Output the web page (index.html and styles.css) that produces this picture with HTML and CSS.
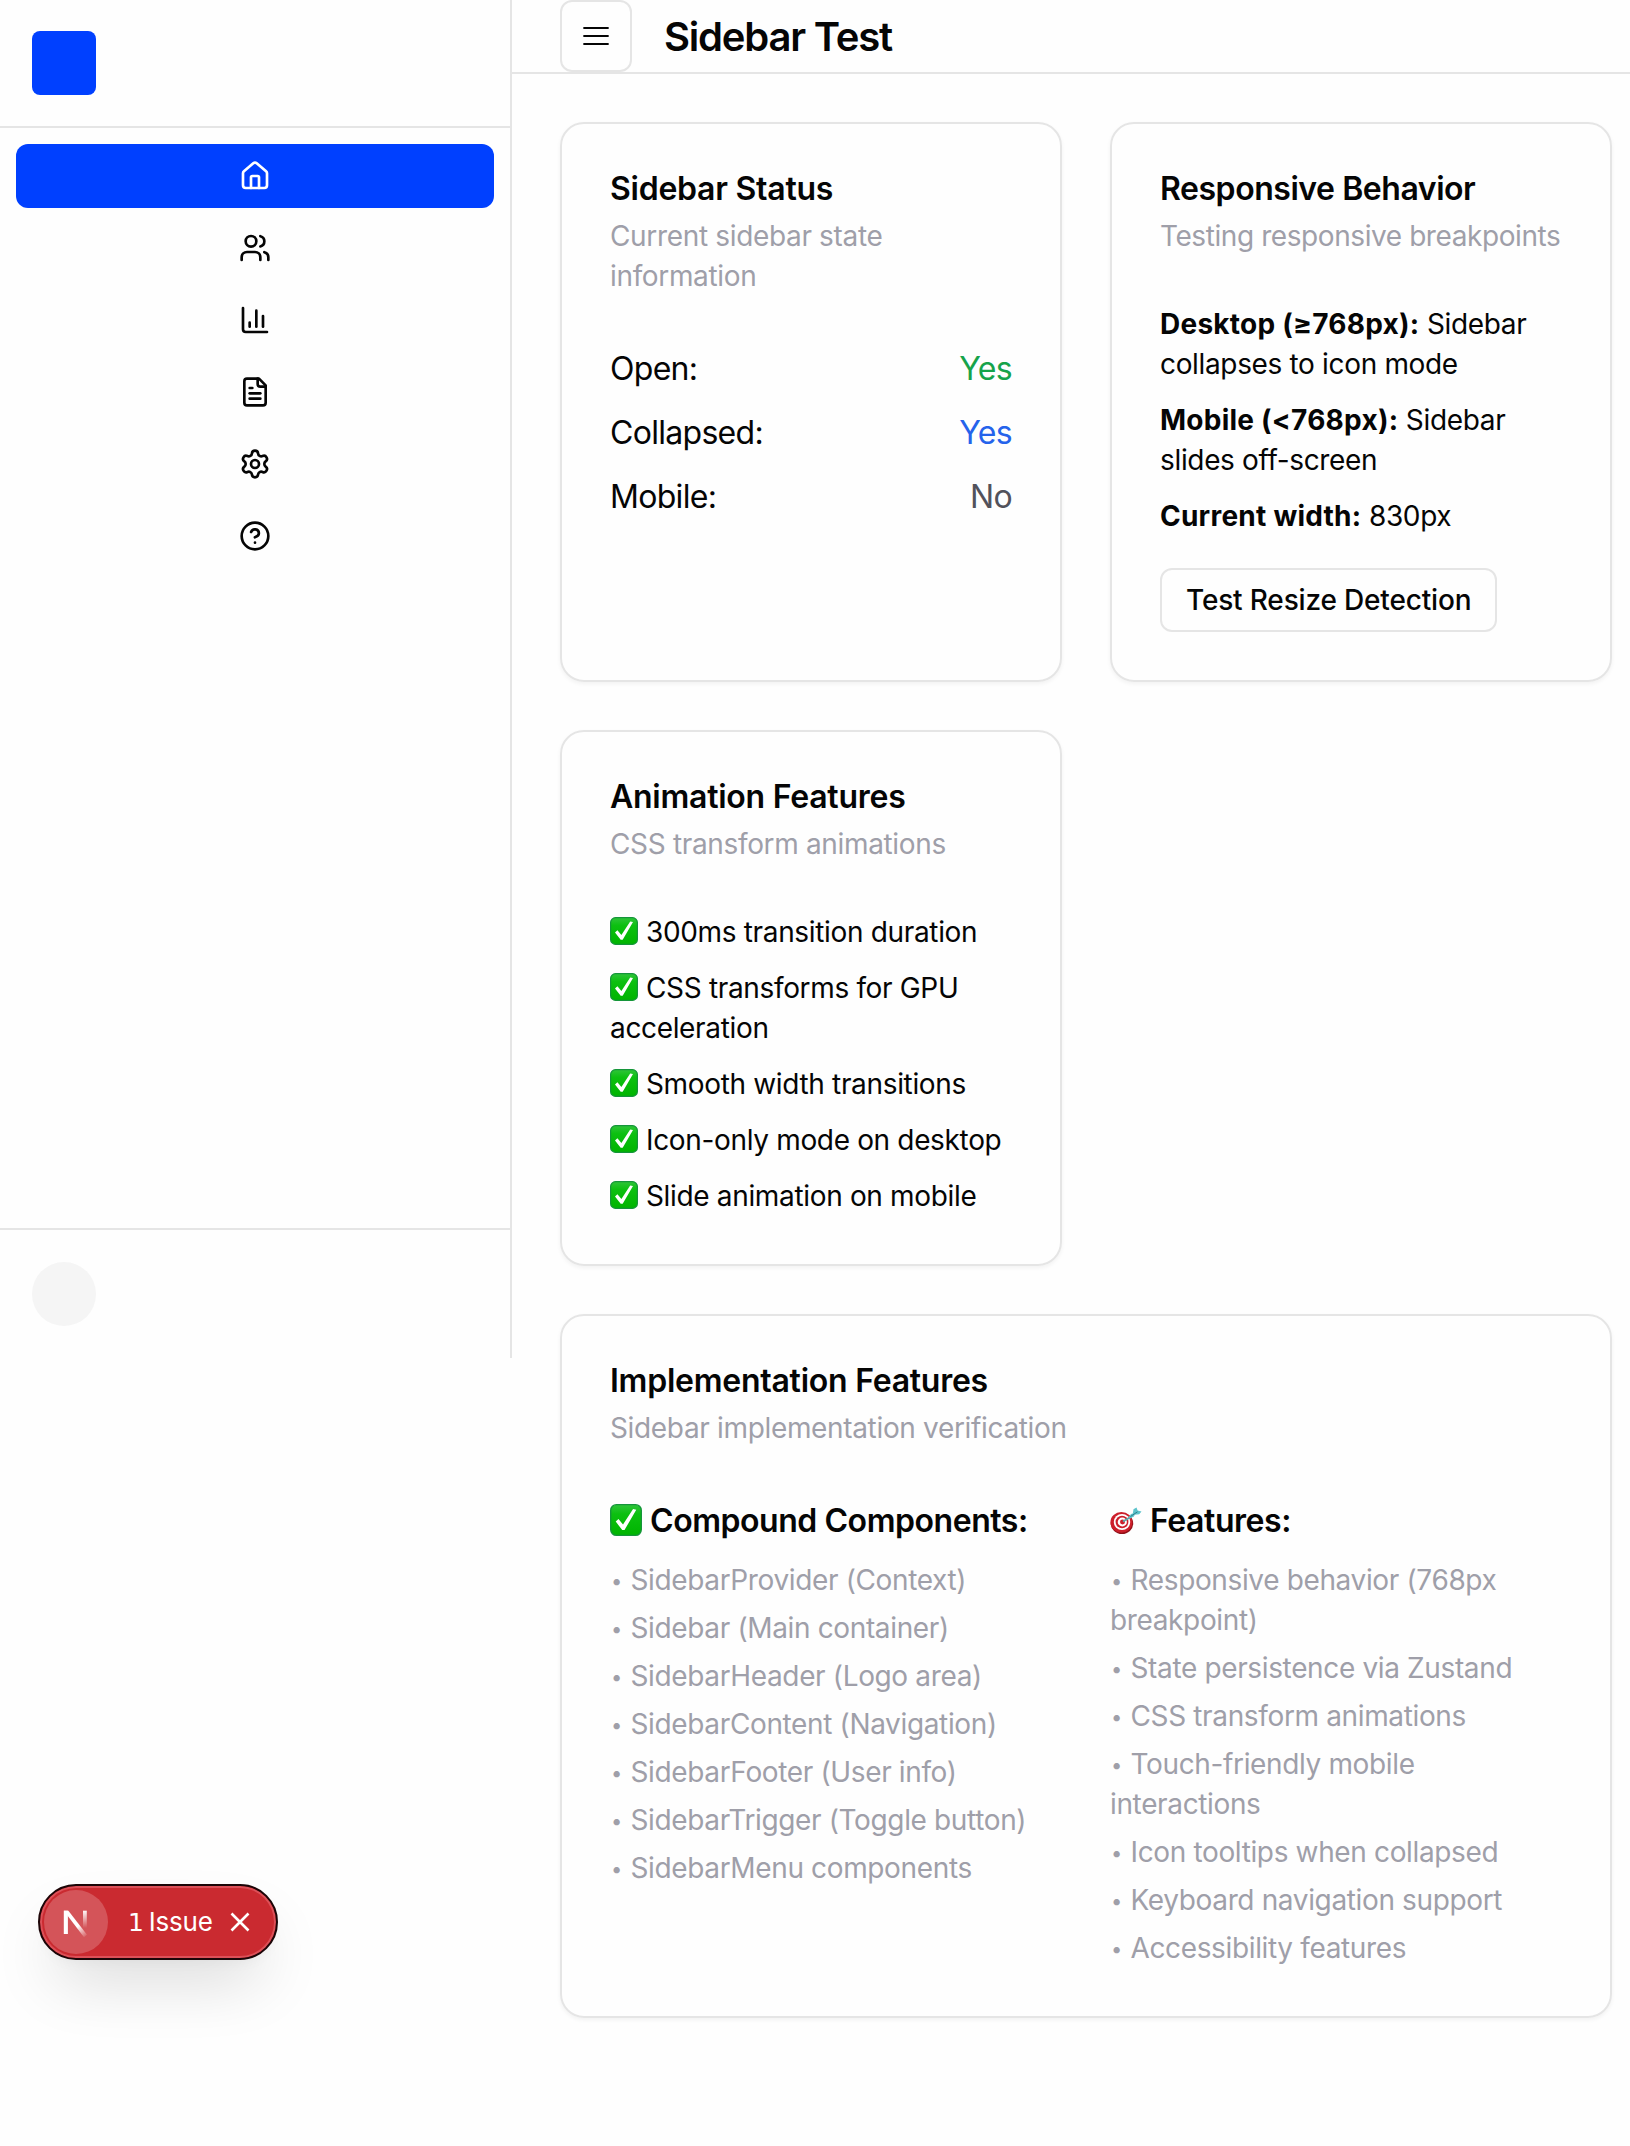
FILE: index.html
```html
<!DOCTYPE html>
<html lang="en">
<head>
<meta charset="utf-8">
<title>Sidebar Test</title>
<link rel="stylesheet" href="styles.css">
</head>
<body>
<svg class="defs" width="0" height="0" aria-hidden="true">
  <defs>
    <linearGradient id="green" x1="0" y1="0" x2="0" y2="1">
      <stop offset="0" stop-color="#2fc43a"/><stop offset=".3" stop-color="#0cc010"/><stop offset="1" stop-color="#00b400"/>
    </linearGradient>
    <symbol id="check" viewBox="0 0 28 28">
      <rect x=".6" y=".6" width="26.8" height="26.8" rx="5" fill="url(#green)" stroke="#15953a" stroke-width="1.2"/>
      <path d="M5 15.400l2.400-2.200 4 4.800L20.200 4.400l2.800.6L12.700 22.800h-2z" fill="#fff"/>
    </symbol>
    <symbol id="target" viewBox="0 0 32 32">
      <ellipse cx="12" cy="19.500" rx="11.200" ry="10.600" fill="#8f1118"/>
      <ellipse cx="11.400" cy="18.400" rx="11" ry="10.400" fill="#cc1f2b"/>
      <ellipse cx="12" cy="18" rx="8.200" ry="8" fill="#fff"/>
      <ellipse cx="12" cy="18" rx="6.400" ry="6.200" fill="#cc1f2b"/>
      <ellipse cx="12.300" cy="18" rx="4.600" ry="4.400" fill="#fff"/>
      <ellipse cx="12.500" cy="18" rx="2.500" ry="2.400" fill="#cc1f2b"/>
      <path d="M13 17.500L24 11" stroke="#5aa9ab" stroke-width="2"/>
      <path d="M18.500 13.500l2.500-3.500 1.800-.6.700-4.200 3-1.700 1.100 2.900 3.900 1.100-2.300 2.700-4.700.6-.8 1.600-3.700 2.100z" fill="#5cc3cb"/>
      <path d="M20.500 12.500l7-4.700" stroke="#2e7f8c" stroke-width="1"/>
    </symbol>
  </defs>
</svg>
<div class="app">
  <aside class="sidebar">
    <div class="sidebar-header"><div class="logo"></div></div>
    <nav class="menu">
      <a class="item active"><svg class="icon" viewBox="0 0 24 24"><path d="M15 21v-8a1 1 0 0 0-1-1h-4a1 1 0 0 0-1 1v8"/><path d="M3 10a2 2 0 0 1 .709-1.528l7-5.999a2 2 0 0 1 2.582 0l7 5.999A2 2 0 0 1 21 10v9a2 2 0 0 1-2 2H5a2 2 0 0 1-2-2z"/></svg></a>
      <a class="item"><svg class="icon" viewBox="0 0 24 24"><path d="M16 21v-2a4 4 0 0 0-4-4H6a4 4 0 0 0-4 4v2"/><circle cx="9" cy="7" r="4"/><path d="M22 21v-2a4 4 0 0 0-3-3.870"/><path d="M16 3.130a4 4 0 0 1 0 7.750"/></svg></a>
      <a class="item"><svg class="icon" viewBox="0 0 24 24"><path d="M3 3v16a2 2 0 0 0 2 2h16"/><path d="M18 17V9"/><path d="M13 17V5"/><path d="M8 17v-3"/></svg></a>
      <a class="item"><svg class="icon" viewBox="0 0 24 24"><path d="M15 2H6a2 2 0 0 0-2 2v16a2 2 0 0 0 2 2h12a2 2 0 0 0 2-2V7Z"/><path d="M14 2v4a2 2 0 0 0 2 2h4"/><path d="M10 9H8"/><path d="M16 13H8"/><path d="M16 17H8"/></svg></a>
      <a class="item"><svg class="icon" viewBox="0 0 24 24"><path d="M9.671 4.136a2.340 2.340 0 0 1 4.659 0 2.340 2.340 0 0 0 3.319 1.915 2.340 2.340 0 0 1 2.330 4.033 2.340 2.340 0 0 0 0 3.831 2.340 2.340 0 0 1-2.330 4.033 2.340 2.340 0 0 0-3.319 1.915 2.340 2.340 0 0 1-4.659 0 2.340 2.340 0 0 0-3.320-1.915 2.340 2.340 0 0 1-2.330-4.033 2.340 2.340 0 0 0 0-3.831A2.340 2.340 0 0 1 6.350 6.051a2.340 2.340 0 0 0 3.319-1.915"/><circle cx="12" cy="12" r="3"/></svg></a>
      <a class="item"><svg class="icon" viewBox="0 0 24 24"><circle cx="12" cy="12" r="10"/><path d="M9.090 9a3 3 0 0 1 5.830 1c0 2-3 3-3 3"/><path d="M12 17h.01"/></svg></a>
    </nav>
    <div class="sidebar-footer"><div class="avatar"></div></div>
  </aside>
  <main class="main">
    <header class="topbar">
      <button class="trigger" aria-label="Toggle sidebar"><svg class="icon" viewBox="0 0 24 24"><path d="M2.500 6h19M2.500 12h19M2.500 18h19"/></svg></button>
      <h1 class="page-title">Sidebar Test</h1>
    </header>
    <div class="content">
      <section class="card">
        <h3 class="card-title">Sidebar Status</h3>
        <p class="card-desc">Current sidebar state information</p>
        <div class="card-body rows">
          <div class="row"><span>Open:</span><span class="green">Yes</span></div>
          <div class="row"><span>Collapsed:</span><span class="blue">Yes</span></div>
          <div class="row"><span>Mobile:</span><span class="gray">No</span></div>
        </div>
      </section>
      <section class="card snug">
        <h3 class="card-title">Responsive Behavior</h3>
        <p class="card-desc">Testing responsive breakpoints</p>
        <div class="card-body lines">
          <p><strong>Desktop (≥768px):</strong> Sidebar collapses to icon mode</p>
          <p><strong>Mobile (&lt;768px):</strong> Sidebar slides off-screen</p>
          <p><strong>Current width:</strong> 830px</p>
        </div>
        <button class="button">Test Resize Detection</button>
      </section>
      <section class="card">
        <h3 class="card-title">Animation Features</h3>
        <p class="card-desc">CSS transform animations</p>
        <div class="card-body lines">
          <p><svg class="emoji"><use href="#check"/></svg>300ms transition duration</p>
          <p><svg class="emoji"><use href="#check"/></svg>CSS transforms for GPU acceleration</p>
          <p><svg class="emoji"><use href="#check"/></svg>Smooth width transitions</p>
          <p><svg class="emoji"><use href="#check"/></svg>Icon-only mode on desktop</p>
          <p><svg class="emoji"><use href="#check"/></svg>Slide animation on mobile</p>
        </div>
      </section>
      <section class="card wide">
        <h3 class="card-title">Implementation Features</h3>
        <p class="card-desc">Sidebar implementation verification</p>
        <div class="card-body columns">
          <div>
            <h4 class="list-title"><svg class="emoji"><use href="#check"/></svg>Compound Components:</h4>
            <ul class="list">
              <li><span class="dot">•</span>SidebarProvider (Context)</li>
              <li><span class="dot">•</span>Sidebar (Main container)</li>
              <li><span class="dot">•</span>SidebarHeader (Logo area)</li>
              <li><span class="dot">•</span>SidebarContent (Navigation)</li>
              <li><span class="dot">•</span>SidebarFooter (User info)</li>
              <li><span class="dot">•</span>SidebarTrigger (Toggle button)</li>
              <li><span class="dot">•</span>SidebarMenu components</li>
            </ul>
          </div>
          <div>
            <h4 class="list-title"><svg class="emoji"><use href="#target"/></svg>Features:</h4>
            <ul class="list">
              <li><span class="dot">•</span>Responsive behavior (768px breakpoint)</li>
              <li><span class="dot">•</span>State persistence via Zustand</li>
              <li><span class="dot">•</span>CSS transform animations</li>
              <li><span class="dot">•</span>Touch-friendly mobile interactions</li>
              <li><span class="dot">•</span>Icon tooltips when collapsed</li>
              <li><span class="dot">•</span>Keyboard navigation support</li>
              <li><span class="dot">•</span>Accessibility features</li>
            </ul>
          </div>
        </div>
      </section>
    </div>
  </main>
</div>
<div class="issue-badge">
  <div class="mark">
    <svg width="64" height="64" viewBox="0 0 64 64">
      <defs>
        <linearGradient id="stem" x1="0" y1="20" x2="0" y2="38" gradientUnits="userSpaceOnUse"><stop stop-color="#fff"/><stop offset="1" stop-color="#fff" stop-opacity="0"/></linearGradient>
        <linearGradient id="slash" x1="34" y1="36" x2="43" y2="47" gradientUnits="userSpaceOnUse"><stop stop-color="#fff"/><stop offset="1" stop-color="#fff" stop-opacity="0"/></linearGradient>
      </defs>
      <path d="M19.800 44V20.700h4.100V44z" fill="#fff"/>
      <path d="M19.800 20.700h4.600L43 44.700l-3 2.500z" fill="url(#slash)"/>
      <path d="M39 20.700h3.800V40H39z" fill="url(#stem)"/>
    </svg>
  </div>
  <span class="issue-text"><span class="issue-count">1</span>Issue</span>
  <svg class="close" width="20" height="20" viewBox="0 0 20 20"><path d="M1.500 1.500l17 17M18.500 1.500l-17 17"/></svg>
</div>
</body>
</html>
```

FILE: styles.css
```css
* { box-sizing: border-box; margin: 0; padding: 0; }

html { overflow: hidden; }

body {
  width: 1660px;
  height: 2146px;
  overflow: hidden;
  background: #fefefe;
  color: #050505;
  font-family: Inter, "Liberation Sans", sans-serif;
  font-size: 32px;
  line-height: 48px;
  letter-spacing: -0.7px;
}

.defs { position: absolute; }

.app { display: flex; align-items: flex-start; }

.sidebar {
  display: flex;
  flex-direction: column;
  flex: none;
  width: 512px;
  height: 1358px;
  border-right: 2px solid #e5e5e5;
}

.sidebar-header {
  display: flex;
  align-items: center;
  height: 128px;
  padding: 0 32px;
  border-bottom: 2px solid #e5e5e5;
}

.logo { width: 64px; height: 64px; border-radius: 8px; background: #0040ff; }

.menu { display: flex; flex: 1; flex-direction: column; gap: 8px; padding: 16px; }

.item { display: flex; align-items: center; justify-content: center; height: 64px; border-radius: 12px; }
.item.active { background: #0040ff; color: #fff; }

.icon {
  width: 32px;
  height: 32px;
  fill: none;
  stroke: currentColor;
  stroke-width: 2;
  stroke-linecap: round;
  stroke-linejoin: round;
}

.sidebar-footer { padding: 32px; border-top: 2px solid #e5e5e5; }
.avatar { width: 64px; height: 64px; border-radius: 50%; background: #f5f5f5; }

.main { flex: 1; }

.topbar {
  display: flex;
  align-items: center;
  gap: 32px;
  height: 74px;
  padding: 0 48px;
  border-bottom: 2px solid #e5e5e5;
}

.trigger {
  display: flex;
  align-items: center;
  justify-content: center;
  width: 72px;
  height: 72px;
  border: 2px solid #e5e5e5;
  border-radius: 12px;
  background: #fefefe;
  color: #050505;
}
.trigger .icon { stroke-width: 1.5; stroke-linecap: butt; }

.page-title { padding-top: 2px; font-size: 40px; font-weight: 600; line-height: 56px; letter-spacing: -1.2px; }

.content { display: grid; grid-template-columns: 1fr 1fr; gap: 48px; padding: 48px; }

.card {
  padding: 48px;
  border: 2px solid #e5e5e5;
  border-radius: 24px;
  box-shadow: 0 2px 4px rgba(0, 0, 0, 0.05);
}
.card.wide { grid-column: 1 / -1; }

.card-title { font-size: 32px; font-weight: 600; line-height: 34px; letter-spacing: -0.25px; }
.card-desc { margin-top: 10px; color: #9f9fa9; font-size: 28px; line-height: 40px; letter-spacing: -0.34px; }
.card-body { margin-top: 48px; }

.snug .card-title { letter-spacing: -0.45px; }
.snug .card-desc { letter-spacing: -0.42px; white-space: nowrap; }

.rows { display: flex; flex-direction: column; gap: 16px; margin-top: 49px; }
.row { display: flex; justify-content: space-between; }
.green { color: #16a34a; }
.blue { color: #2563eb; }
.gray { color: #52525b; }

.lines { display: flex; flex-direction: column; gap: 16px; font-size: 28px; line-height: 40px; letter-spacing: -0.34px; }
.lines strong { font-weight: 700; letter-spacing: 0.24px; }

.button {
  display: block;
  height: 64px;
  margin-top: 32px;
  padding: 0 24px;
  border: 2px solid #e5e5e5;
  border-radius: 12px;
  background: #fefefe;
  color: #050505;
  font: 500 28px/40px Inter, "Liberation Sans", sans-serif;
  letter-spacing: -0.17px;
}

.emoji { width: 28px; height: 28px; margin-right: 8px; vertical-align: -3px; }

.columns { display: grid; grid-template-columns: 1fr 1fr; gap: 48px; }
.list-title { padding-top: 1px; font-size: 32px; font-weight: 600; line-height: 48px; letter-spacing: -0.45px; white-space: nowrap; }
.list-title .emoji { width: 32px; height: 32px; vertical-align: -4px; }

.list { display: flex; flex-direction: column; gap: 8px; margin-top: 15px; color: #9f9fa9; font-size: 28px; line-height: 40px; letter-spacing: -0.36px; list-style: none; }
.dot { display: inline-block; width: 20.5px; font-size: 20px; line-height: 20px; text-indent: 1px; vertical-align: 2px; }

.issue-badge {
  position: absolute;
  left: 38px;
  top: 1884px;
  display: flex;
  align-items: center;
  width: 240px;
  height: 76px;
  padding-left: 4px;
  border: 2px solid #1c0507;
  border-radius: 38px;
  background: #ca2a30;
  box-shadow: inset 0 0 0 2px #dc5058, 0 32px 64px -16px rgba(0, 0, 0, 0.18), 0 8px 16px -8px rgba(0, 0, 0, 0.05);
}
.mark { width: 64px; height: 64px; border-radius: 50%; background: rgba(255, 255, 255, 0.2); }
.issue-text { margin-left: 20px; color: #fff; font-size: 26px; letter-spacing: -0.2px; }
.issue-count { margin-right: 5px; font-family: "DejaVu Sans", sans-serif; font-size: 25px; }
.close { margin-left: 17px; fill: none; stroke: #fff; stroke-width: 2.6; }
```
